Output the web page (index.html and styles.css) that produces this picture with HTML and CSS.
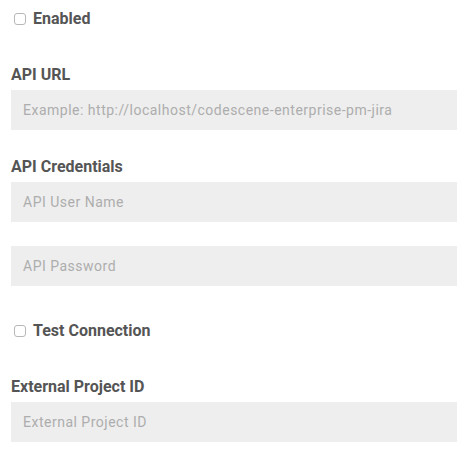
FILE: index.html
```html
<!DOCTYPE html>
<html>
<head>
<meta charset="utf-8">
<link rel="stylesheet" href="styles.css">
</head>
<body>
<form class="form">
  <label class="check-row check-first">
    <input type="checkbox" class="check"><span class="check-text">Enabled</span>
  </label>

  <div class="field">
    <div class="label">API URL</div>
    <input class="text-input" type="text" placeholder="Example: http://localhost/codescene-enterprise-pm-jira">
  </div>

  <div class="field">
    <div class="label">API Credentials</div>
    <input class="text-input" type="text" placeholder="API User Name">
    <input class="text-input spaced" type="password" placeholder="API Password">
  </div>

  <label class="check-row check-test">
    <input type="checkbox" class="check"><span class="check-text">Test Connection</span>
  </label>

  <div class="field">
    <div class="label">External Project ID</div>
    <input class="text-input" type="text" placeholder="External Project ID">
  </div>
</form>
</body>
</html>
```

FILE: styles.css
```css
html, body {
  margin: 0;
  padding: 0;
  background: #fff;
}

body {
  font-family: Roboto, "Liberation Sans", sans-serif;
}

.form {
  display: flex;
  flex-direction: column;
  padding: 8px 12px 0 11px;
}

.check-row {
  display: flex;
  align-items: center;
  height: 21px;
  line-height: 21px;
  margin-bottom: 35px;
}

.check-test {
  margin-top: 8px;
}

.check {
  appearance: none;
  -webkit-appearance: none;
  width: 12px;
  height: 12px;
  margin: 1px 7px 0 3px;
  border: 1px solid #b8b8b8;
  border-radius: 3px;
  background: #fff;
  flex: none;
}

.check-text,
.label {
  font-size: 16px;
  font-weight: 700;
  color: #555;
  line-height: 21px;
}

.field {
  display: flex;
  flex-direction: column;
  margin-bottom: 26px;
}

.label {
  margin-bottom: 5px;
}

.text-input {
  box-sizing: border-box;
  height: 40px;
  width: 100%;
  border: none;
  outline: none;
  background: #eeeeee;
  padding: 0 12px;
  font-family: Roboto, "Liberation Sans", sans-serif;
  font-size: 14px;
  letter-spacing: 0.5px;
  color: #555;
}

.text-input::placeholder {
  color: #adadad;
}

.spaced {
  margin-top: 24px;
}
```
